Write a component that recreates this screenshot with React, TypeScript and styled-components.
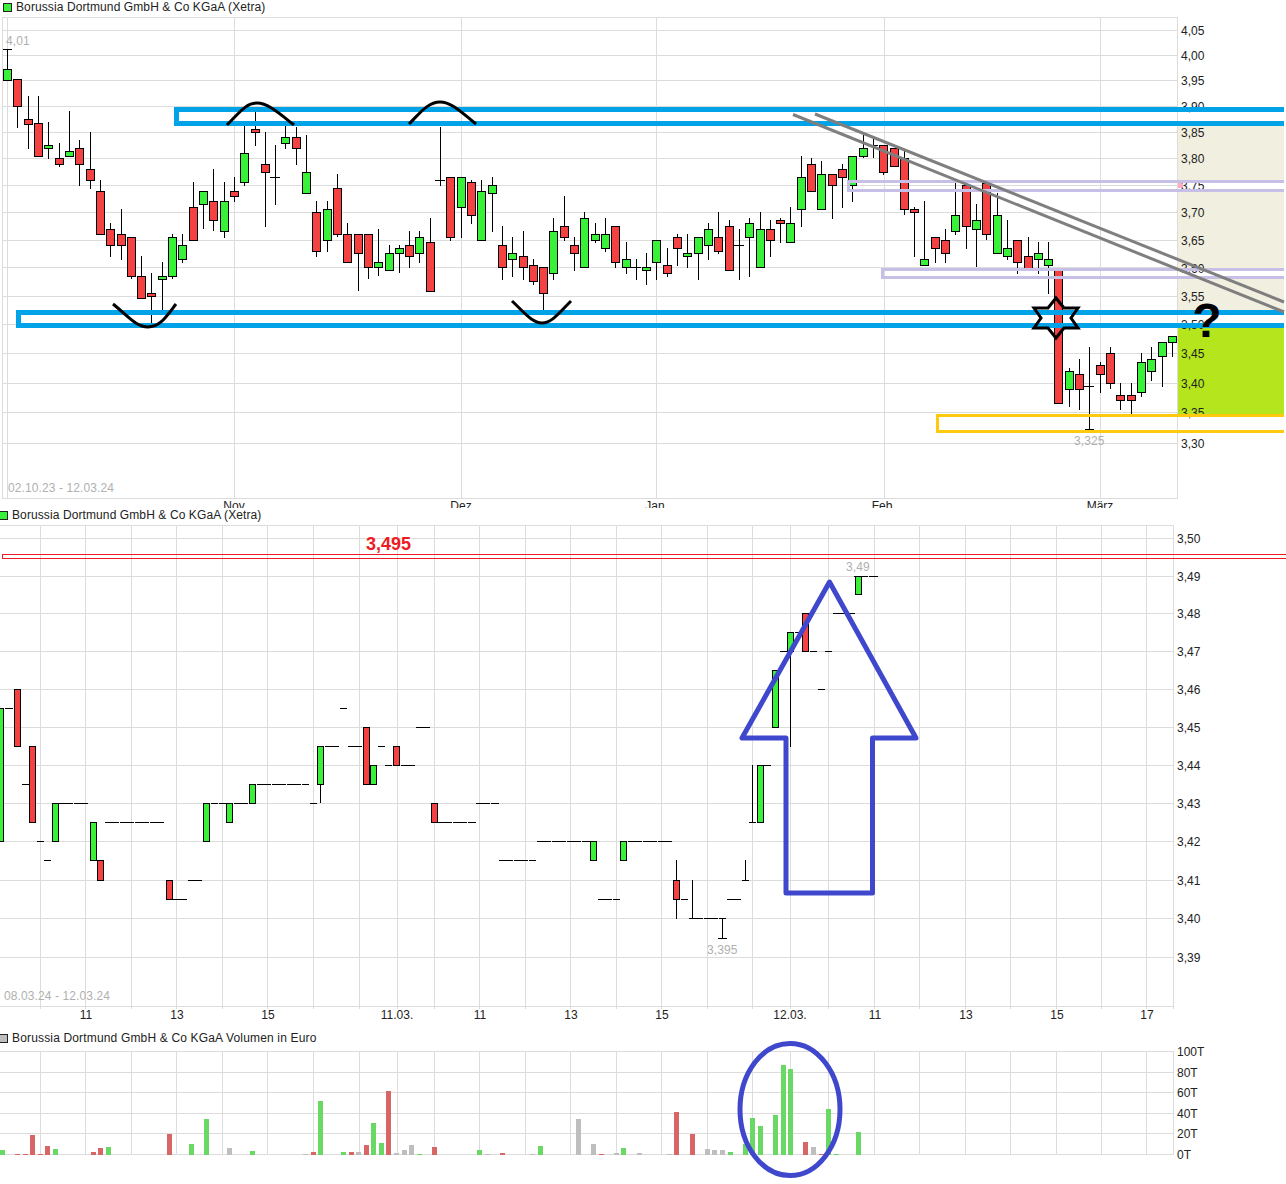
import React from "react";
import styled, { createGlobalStyle } from "styled-components";

const GlobalStyle = createGlobalStyle`
  html, body { margin: 0; padding: 0; background: #fff; }
  body { font-family: "Liberation Sans", Arial, sans-serif; }
`;

const Page = styled.main`
  width: 1286px;
  height: 1184px;
  display: flex;
  flex-direction: column;
  overflow: hidden;
  background: #fff;
`;

const LegendRow = styled.header<{ $height: number; $inset: number }>`
  height: ${(p) => p.$height}px;
  padding-left: ${(p) => p.$inset}px;
  display: flex;
  align-items: center;
  gap: 4px;
  flex: none;
  box-sizing: border-box;
`;

const Swatch = styled.span<{ $color: string; $clipped?: boolean }>`
  width: 9px;
  height: 9px;
  flex: none;
  box-sizing: border-box;
  border: 1px solid #222;
  background: ${(p) => p.$color};
  margin-left: ${(p) => (p.$clipped ? "-1px" : "0")};
`;

const LegendText = styled.span<{ $spacing: number }>`
  font-size: 12px;
  line-height: 13px;
  letter-spacing: ${(p) => p.$spacing}px;
  color: #222;
  white-space: nowrap;
`;

const Plot = styled.svg<{ $height: number; $spill?: boolean }>`
  display: block;
  flex: none;
  width: 1286px;
  height: ${(p) => p.$height}px;
  overflow: ${(p) => (p.$spill ? "visible" : "hidden")};
`;

const GridLine = styled.line`
  stroke: #dcdcdc;
  stroke-width: 1;
  shape-rendering: crispEdges;
`;

const Wick = styled.line`
  stroke: #000;
  stroke-width: 1;
  shape-rendering: crispEdges;
`;

const FlatDash = styled.line`
  stroke: #000;
  stroke-width: 1;
  stroke-dasharray: 14 1;
  shape-rendering: crispEdges;
`;

const Body = styled.rect<{ $up: boolean }>`
  fill: ${(p) => (p.$up ? "#39f139" : "#f44141")};
  stroke: #000;
  stroke-width: 1;
  shape-rendering: crispEdges;
`;

const Zone = styled.rect<{ $color: string }>`
  fill: ${(p) => p.$color};
  shape-rendering: crispEdges;
`;

const Band = styled.path<{ $color: string; $width: number }>`
  fill: none;
  stroke: ${(p) => p.$color};
  stroke-width: ${(p) => p.$width};
  shape-rendering: crispEdges;
`;

const Sketch = styled.path<{ $color: string; $width: number; $round?: boolean }>`
  fill: none;
  stroke: ${(p) => p.$color};
  stroke-width: ${(p) => p.$width};
  stroke-linejoin: ${(p) => (p.$round ? "round" : "miter")};
  stroke-linecap: ${(p) => (p.$round ? "round" : "butt")};
`;

const Ring = styled.ellipse`
  fill: none;
  stroke: #3f48cc;
  stroke-width: 5;
`;

const VolumeBar = styled.rect<{ $tone: string }>`
  fill: ${(p) =>
    p.$tone === "g" ? "#6ad865" : p.$tone === "r" ? "#d96666" : "#bebebe"};
  shape-rendering: crispEdges;
`;

const AxisText = styled.text`
  font-family: "Liberation Sans", Arial, sans-serif;
  font-size: 12px;
  fill: #222;
`;

const NoteText = styled.text`
  font-family: "Liberation Sans", Arial, sans-serif;
  font-size: 12px;
  letter-spacing: 0.1px;
  fill: #b0b0b0;
`;

const PriceMark = styled.text`
  font-family: "Liberation Sans", Arial, sans-serif;
  font-size: 18px;
  font-weight: bold;
  fill: #ed1c24;
`;

const Query = styled.text`
  font-family: "Liberation Sans", Arial, sans-serif;
  font-size: 48px;
  font-weight: bold;
  fill: #000;
`;

type Candle = [number, number, number, number, number, "g" | "r" | "d"];

const dailyCandles: Candle[] = [
  [7, 49, 69, 80, 80, "g"], [17, 79, 79, 106, 128, "r"], [28, 96, 119, 124, 149, "r"],
  [38, 96, 123, 156, 156, "r"], [48, 122, 145, 148, 159, "g"], [59, 143, 158, 164, 167, "r"],
  [69, 111, 151, 156, 156, "g"], [79, 140, 148, 164, 186, "r"], [90, 132, 169, 180, 189, "r"],
  [100, 180, 191, 234, 234, "r"], [110, 223, 229, 245, 257, "r"], [121, 209, 234, 245, 260, "r"],
  [131, 237, 237, 276, 279, "r"], [141, 256, 276, 298, 298, "r"], [151, 273, 293, 296, 323, "r"],
  [162, 262, 276, 279, 310, "g"], [172, 234, 237, 276, 279, "g"], [182, 234, 245, 259, 263, "g"],
  [193, 182, 207, 240, 240, "r"], [203, 191, 191, 204, 229, "g"], [213, 169, 201, 220, 231, "r"],
  [224, 182, 201, 231, 238, "g"], [234, 177, 191, 196, 202, "r"], [244, 126, 153, 182, 186, "g"],
  [255, 107, 129, 132, 146, "r"], [265, 132, 164, 172, 227, "r"], [275, 145, 177, 177, 205, "d"],
  [285, 126, 137, 143, 149, "g"], [296, 127, 137, 148, 165, "r"], [306, 135, 172, 193, 193, "g"],
  [316, 201, 212, 251, 257, "r"], [327, 201, 209, 240, 252, "g"], [337, 174, 188, 234, 237, "r"],
  [347, 223, 234, 262, 262, "r"], [358, 234, 234, 253, 291, "r"], [368, 234, 234, 267, 279, "r"],
  [378, 229, 262, 267, 276, "g"], [389, 245, 253, 270, 270, "g"], [399, 245, 248, 253, 273, "g"],
  [409, 231, 245, 256, 268, "r"], [419, 231, 237, 253, 263, "g"], [430, 218, 242, 291, 291, "r"],
  [440, 127, 180, 180, 186, "d"], [450, 177, 177, 237, 241, "r"], [461, 177, 177, 207, 238, "g"],
  [471, 180, 182, 215, 224, "r"], [481, 180, 191, 240, 240, "g"], [492, 177, 185, 193, 232, "g"],
  [502, 226, 245, 267, 280, "r"], [512, 237, 253, 259, 277, "g"], [523, 231, 256, 267, 280, "r"],
  [533, 259, 265, 281, 285, "r"], [543, 267, 267, 293, 310, "r"], [553, 218, 231, 273, 280, "g"],
  [564, 196, 226, 237, 241, "r"], [574, 237, 245, 253, 271, "r"], [584, 212, 218, 267, 267, "g"],
  [595, 223, 234, 240, 243, "g"], [605, 218, 234, 248, 252, "g"], [615, 226, 226, 262, 268, "r"],
  [626, 242, 259, 267, 274, "g"], [636, 259, 267, 267, 280, "d"], [646, 253, 267, 270, 285, "g"],
  [656, 240, 240, 262, 280, "g"], [667, 248, 265, 273, 277, "r"], [677, 234, 237, 248, 266, "r"],
  [687, 234, 253, 256, 268, "g"], [698, 237, 237, 253, 280, "g"], [708, 223, 229, 245, 260, "g"],
  [718, 212, 237, 251, 254, "r"], [729, 220, 226, 270, 270, "r"], [739, 229, 245, 245, 280, "d"],
  [749, 218, 223, 237, 277, "g"], [760, 212, 229, 267, 267, "g"], [770, 220, 229, 240, 257, "r"],
  [780, 218, 220, 223, 243, "r"], [790, 207, 223, 242, 242, "g"], [801, 156, 177, 209, 227, "g"],
  [811, 158, 164, 191, 191, "r"], [821, 161, 174, 209, 209, "g"], [832, 174, 174, 185, 219, "r"],
  [842, 164, 169, 177, 208, "r"], [852, 156, 156, 185, 202, "g"], [863, 134, 148, 156, 158, "g"],
  [873, 139, 145, 145, 158, "d"], [883, 145, 145, 172, 175, "r"], [894, 148, 148, 166, 166, "r"],
  [904, 150, 158, 209, 215, "r"], [914, 207, 209, 212, 257, "r"], [924, 201, 259, 265, 265, "g"],
  [935, 237, 237, 248, 263, "r"], [945, 229, 240, 253, 263, "r"], [955, 183, 215, 231, 235, "g"],
  [966, 183, 185, 226, 249, "r"], [976, 204, 220, 229, 267, "g"], [986, 183, 183, 234, 240, "r"],
  [997, 193, 215, 253, 253, "g"], [1007, 220, 248, 256, 260, "g"], [1017, 240, 240, 262, 274, "r"],
  [1028, 237, 256, 268, 268, "r"], [1038, 242, 253, 259, 274, "g"], [1048, 242, 259, 265, 294, "g"],
  [1058, 268, 268, 403, 403, "r"], [1069, 368, 371, 389, 407, "g"], [1079, 359, 374, 389, 410, "r"],
  [1089, 347, 386, 386, 429, "d"], [1100, 362, 365, 374, 393, "r"], [1110, 347, 353, 383, 389, "r"],
  [1120, 383, 395, 400, 410, "r"], [1131, 383, 395, 400, 414, "r"], [1141, 353, 362, 392, 397, "g"],
  [1151, 347, 359, 371, 381, "g"], [1162, 342, 342, 356, 387, "g"], [1172, 336, 336, 342, 357, "g"],
];

const dailyGridY = [17, 30, 55, 80, 106, 132, 158, 185, 212, 240, 267, 296, 324, 353, 383, 412, 443, 498];
const dailyGridX = [2, 7, 234, 461, 656, 884, 1100, 1177];
const dailyAxis: [string, number][] = [
  ["4,05", 30], ["4,00", 55], ["3,95", 80], ["3,90", 106], ["3,85", 132], ["3,80", 158],
  ["3,75", 185], ["3,70", 212], ["3,65", 240], ["3,60", 268], ["3,55", 296], ["3,50", 324],
  ["3,45", 353], ["3,40", 383], ["3,35", 412], ["3,30", 443],
];
const months: [string, number][] = [["Nov", 234], ["Dez", 461], ["Jan", 655], ["Feb", 882], ["März", 1100]];

const intradayGridY = [525, 538, 576, 613, 651, 689, 727, 765, 803, 841, 880, 918, 957, 1006];
const sharedGridX = [40, 85, 131, 176, 222, 267, 313, 359, 397, 434, 479, 525, 570, 616, 661, 707, 752, 790, 828, 874, 919, 965, 1010, 1056, 1101, 1146, 1173];
const intradayAxis: [string, number][] = [
  ["3,50", 538], ["3,49", 576], ["3,48", 613], ["3,47", 651], ["3,46", 689], ["3,45", 727],
  ["3,44", 765], ["3,43", 803], ["3,42", 841], ["3,41", 880], ["3,40", 918], ["3,39", 957],
];
const timeTicks: [string, number][] = [
  ["11", 86], ["13", 177], ["15", 268], ["11.03.", 397], ["11", 480], ["13", 571], ["15", 662],
  ["12.03.", 790], ["11", 875], ["13", 966], ["15", 1057], ["17", 1147],
];

// left edge, top, bottom, rising
const intradayBodies: [number, number, number, boolean][] = [
  [-3, 708, 841, true], [14, 689, 746, false], [29, 746, 822, false], [52, 803, 841, true],
  [90, 822, 860, true], [97, 860, 880, false], [166, 880, 899, false], [203, 803, 841, true],
  [226, 803, 822, true], [249, 784, 803, true], [317, 746, 784, true], [363, 727, 784, false],
  [370, 765, 784, true], [393, 746, 765, false], [431, 803, 822, false], [590, 841, 860, true],
  [620, 841, 860, true], [673, 880, 899, false], [757, 765, 822, true], [772, 670, 727, true],
  [787, 632, 651, true], [802, 613, 651, false], [855, 576, 594, true],
];

// from x, to x, y
const intradayDashes: [number, number, number][] = [
  [5, 13, 708], [22, 29, 784], [37, 44, 841], [44, 51, 860], [59, 89, 803], [105, 165, 822],
  [173, 188, 899], [188, 203, 880], [211, 218, 803], [219, 226, 803], [234, 248, 803],
  [257, 309, 784], [310, 317, 803], [325, 339, 746], [340, 347, 708], [348, 362, 746],
  [378, 385, 746], [385, 392, 765], [401, 415, 765], [416, 430, 727], [438, 476, 822],
  [476, 499, 803], [499, 536, 860], [537, 590, 841], [598, 620, 899], [628, 673, 841],
  [681, 688, 899], [689, 726, 918], [718, 727, 938], [727, 741, 899], [742, 749, 880],
  [749, 756, 822], [764, 771, 765], [780, 787, 651], [795, 802, 632], [810, 817, 651],
  [818, 825, 689], [825, 832, 651], [833, 855, 613], [854, 878, 576],
];

// x, top, bottom
const intradayWicks: [number, number, number][] = [
  [320, 784, 803], [676, 860, 919], [692, 880, 918], [722, 918, 938], [745, 860, 880],
  [752, 765, 822], [790, 651, 747],
];

const volumeGridY = [1051, 1072, 1092, 1113, 1133, 1154];
const volumeAxis: [string, number][] = [["100T", 1051], ["80T", 1072], ["60T", 1092], ["40T", 1113], ["20T", 1133], ["0T", 1154]];

// left edge, top, tone
const volumes: [number, number, string][] = [
  [0, 1150, "g"], [15, 1154, "r"], [23, 1154, "r"], [30, 1135, "r"], [38, 1154, "r"], [45, 1146, "r"],
  [53, 1149, "g"], [91, 1152, "r"], [98, 1148, "r"], [106, 1147, "g"], [167, 1134, "r"], [189, 1144, "g"],
  [204, 1119, "g"], [227, 1148, "n"], [250, 1151, "g"], [303, 1154, "n"], [311, 1152, "r"], [318, 1101, "g"],
  [341, 1152, "g"], [349, 1152, "r"], [356, 1152, "n"], [364, 1145, "r"], [371, 1123, "g"], [379, 1143, "g"],
  [386, 1091, "r"], [394, 1153, "n"], [402, 1150, "n"], [409, 1145, "n"], [417, 1154, "g"], [432, 1147, "r"],
  [477, 1150, "g"], [485, 1154, "n"], [500, 1153, "r"], [530, 1154, "n"], [538, 1146, "g"], [576, 1119, "n"],
  [591, 1144, "n"], [599, 1154, "r"], [614, 1153, "n"], [621, 1148, "g"], [637, 1153, "n"], [667, 1154, "n"],
  [674, 1112, "r"], [690, 1134, "r"], [705, 1149, "n"], [712, 1150, "n"], [720, 1150, "n"], [728, 1152, "g"],
  [743, 1144, "g"], [750, 1118, "g"], [758, 1126, "g"], [773, 1115, "g"], [781, 1065, "g"], [788, 1069, "g"],
  [803, 1142, "r"], [811, 1147, "n"], [819, 1154, "r"], [826, 1109, "g"], [834, 1154, "g"], [856, 1132, "g"],
];

const hLine = (y: number, to: number, from = 2) => (
  <GridLine key={`h${y}`} x1={from} x2={to} y1={y + 0.5} y2={y + 0.5} />
);
const vLine = (x: number, top: number, bottom: number) => (
  <GridLine key={`v${x}`} x1={x + 0.5} x2={x + 0.5} y1={top} y2={bottom} />
);

const DailyChart = () => (
  <Plot $height={494} viewBox="0 14 1286 494">
    {dailyGridY.map((y) => hLine(y, 1178))}
    {dailyGridX.map((x) => vLine(x, 17, 498))}

    <Zone $color="#f1efe0" x={1178} y={126} width={106} height={54} />
    <Zone $color="#f1efe0" x={1178} y={192} width={106} height={76} />
    <Zone $color="#f1efe0" x={1178} y={279} width={106} height={31} />
    <Zone $color="#b5e61d" x={1178} y={328} width={106} height={86} />
    <Zone $color="#ffaec9" x={1178} y={183} width={5} height={5} />

    {dailyAxis.map(([label, y]) => (
      <AxisText key={label} x={1181} y={y + 5}>{label}</AxisText>
    ))}
    {months.map(([label, x]) => (
      <AxisText key={label} x={x} y={510} textAnchor="middle">{label}</AxisText>
    ))}
    <NoteText x={6} y={45}>4,01</NoteText>
    <NoteText x={8} y={492}>02.10.23 - 12.03.24</NoteText>
    <NoteText x={1074} y={445}>3,325</NoteText>

    {dailyCandles.map(([c, hi, top, bot, lo, tone]) => (
      <g key={c}>
        <Wick x1={c + 0.5} x2={c + 0.5} y1={hi} y2={lo} />
        {tone === "d" ? (
          <Wick x1={c - 5} x2={c + 5} y1={top + 0.5} y2={top + 0.5} />
        ) : (
          <Body $up={tone === "g"} x={c - 4 + 0.5} y={top + 0.5} width={8} height={bot - top} />
        )}
      </g>
    ))}
    <Wick x1={3} x2={12} y1={49.5} y2={49.5} />
    <Wick x1={1085} x2={1094} y1={429.5} y2={429.5} />

    <Band $color="#00a2e8" $width={5} d="M1284 109.5H176.5V123.5H1284" />
    <Band $color="#00a2e8" $width={5} d="M1284 312.5H18.5V325.5H1284" />
    <Band $color="#c8bfe7" $width={3} d="M1284 181.5H848.5V190.5H1284" />
    <Band $color="#c8bfe7" $width={3} d="M1284 269H882.5V277.5H1284" />
    <Band $color="#ffc90e" $width={3} d="M1284 415.5H937.5V431.5H1284" />

    <Sketch $color="#7f7f7f" $width={3} d="M793 114.5L1284 312" />
    <Sketch $color="#7f7f7f" $width={3} d="M815 114L1284 302" />

    <Sketch $color="#000" $width={3} d="M227 125C240 112 246 103 257 103C268 103 280 114 294 125" />
    <Sketch $color="#000" $width={3} d="M409 124C420 113 428 102 440 102C452 102 462 113 476 124" />
    <Sketch $color="#000" $width={3} d="M113 304C128 316 136 327 148 327C160 327 166 317 176 304" />
    <Sketch $color="#000" $width={3} d="M512 301C525 313 532 323 542 323C552 323 560 312 571 301" />
    <Sketch
      $color="#000"
      $width={3}
      d="M1056 298L1064 308H1078L1071 318L1078 328H1064L1056 338L1048 328H1034L1041 318L1034 308H1048Z"
    />
    <Query x={1207} y={337} textAnchor="middle">?</Query>
  </Plot>
);

const IntradayChart = () => (
  <Plot $height={507} viewBox="0 523 1286 507">
    {intradayGridY.map((y) => hLine(y, 1174, 0))}
    {sharedGridX.map((x) => vLine(x, 525, 1009))}

    {intradayAxis.map(([label, y]) => (
      <AxisText key={label} x={1177} y={y + 5}>{label}</AxisText>
    ))}
    {timeTicks.map(([label, x]) => (
      <AxisText key={`${label}${x}`} x={x} y={1019} textAnchor="middle">{label}</AxisText>
    ))}
    <NoteText x={4} y={1000}>08.03.24 - 12.03.24</NoteText>
    <NoteText x={846} y={571}>3,49</NoteText>
    <NoteText x={707} y={954}>3,395</NoteText>

    <Band $color="#ed1c24" $width={1} d="M1286 554.5H2.5V558.5H1286" />
    <PriceMark x={366} y={550}>3,495</PriceMark>

    {intradayDashes.map(([a, b, y]) => (
      <FlatDash key={`${a}-${y}`} x1={a} x2={b} y1={y + 0.5} y2={y + 0.5} />
    ))}
    {intradayWicks.map(([x, a, b]) => (
      <Wick key={`${x}-${a}`} x1={x + 0.5} x2={x + 0.5} y1={a} y2={b} />
    ))}
    {intradayBodies.map(([x, top, bot, up]) => (
      <Body key={`${x}-${top}`} $up={up} x={x + 0.5} y={top + 0.5} width={6} height={bot - top} />
    ))}

    <Sketch
      $color="#3f48cc"
      $width={5}
      $round
      d="M829.5 582L742 738H786V893H872.5V738H916Z"
    />
  </Plot>
);

const VolumeChart = () => (
  <Plot $height={138} $spill viewBox="0 1046 1286 138">
    {volumeGridY.map((y) => hLine(y, 1174, 0))}
    {sharedGridX.map((x) => vLine(x, 1051, 1155))}
    {volumeAxis.map(([label, y]) => (
      <AxisText key={label} x={1177} y={y + 5}>{label}</AxisText>
    ))}
    {volumes.map(([x, top, tone]) => (
      <VolumeBar key={x} $tone={tone} x={x} y={top} width={5} height={1155 - top} />
    ))}
    <Ring cx={790} cy={1109.5} rx={50} ry={66} />
  </Plot>
);

export default function App() {
  return (
    <Page>
      <GlobalStyle />
      <LegendRow $height={14} $inset={3}>
        <Swatch $color="#39f139" />
        <LegendText $spacing={0.1}>Borussia Dortmund GmbH &amp; Co KGaA (Xetra)</LegendText>
      </LegendRow>
      <DailyChart />
      <LegendRow $height={15} $inset={0}>
        <Swatch $color="#39f139" $clipped />
        <LegendText $spacing={0.1}>Borussia Dortmund GmbH &amp; Co KGaA (Xetra)</LegendText>
      </LegendRow>
      <IntradayChart />
      <LegendRow $height={16} $inset={0}>
        <Swatch $color="#bebebe" $clipped />
        <LegendText $spacing={0.16}>Borussia Dortmund GmbH &amp; Co KGaA Volumen in Euro</LegendText>
      </LegendRow>
      <VolumeChart />
    </Page>
  );
}
